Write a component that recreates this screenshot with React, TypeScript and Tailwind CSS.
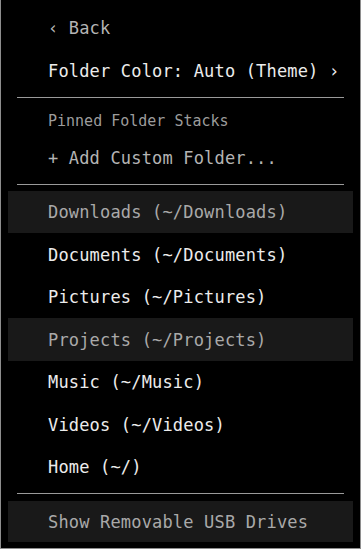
const folders = [
    { label: "Downloads (~/Downloads)", active: true },
    { label: "Documents (~/Documents)", active: false },
    { label: "Pictures (~/Pictures)", active: false },
    { label: "Projects (~/Projects)", active: true },
    { label: "Music (~/Music)", active: false },
    { label: "Videos (~/Videos)", active: false },
    { label: "Home (~/)", active: false },
]

function Separator({ className }: { className: string }) {
    return <div className={`mx-[9px] h-px bg-[#9a9a9a] ${className}`} />
}

export default function App() {
    return (
        <div
            className="flex h-[549px] w-[361px] flex-col border-x border-b border-[#8e8e8e] bg-black px-[7px] pt-[7px] text-[17px] tracking-[0.17px] text-[#ececec]"
            style={{ fontFamily: '"DejaVu Sans Mono", "Liberation Mono", monospace' }}
        >
            <div className="flex h-[42px] items-center pl-[40px] pt-[2px] text-[#b4b4b4]">‹ Back</div>
            <div className="flex h-[43px] items-center pl-[40px] pt-[2px]">Folder Color: Auto (Theme) ›</div>

            <Separator className="mt-[5px]" />

            <div className="flex h-[44px] items-center pl-[40px] pt-[2px] text-[15px] tracking-normal text-[#9c9c9c]">
                Pinned Folder Stacks
            </div>
            <div className="flex h-[32px] items-center pl-[40px] pt-[2px] text-[#b4b4b4]">+ Add Custom Folder...</div>

            <Separator className="mt-[10px]" />

            <div className="mt-[6px] flex flex-col">
                {folders.map((f, i) => (
                    <div
                        key={f.label}
                        className={`flex items-center pl-[40px] pt-[2px] ${i % 2 === 0 ? "h-[42px]" : "h-[43px]"} ${
                            f.active ? "bg-[#191919] text-[#a9a9a9]" : ""
                        }`}
                    >
                        {f.label}
                    </div>
                ))}
            </div>

            <Separator className="mt-[5px]" />

            <div className="mt-[7px] flex h-[41px] items-center bg-[#191919] pl-[40px] pt-[2px] text-[#a9a9a9]">
                Show Removable USB Drives
            </div>
        </div>
    )
}
